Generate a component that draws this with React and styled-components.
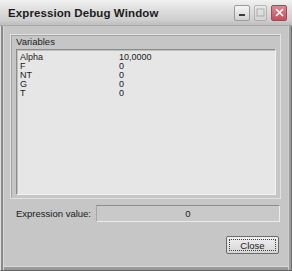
import React from "react";
import styled, { createGlobalStyle } from "styled-components";

const Global = createGlobalStyle`
  html, body { margin: 0; padding: 0; background: #c8c8c8; }
  body { font-family: "Liberation Sans", Arial, sans-serif; }
`;

const Window = styled.div`
  width: 292px;
  height: 271px;
  box-sizing: border-box;
  display: flex;
  flex-direction: column;
  background: #c6c6c6;
  border-left: 1px solid #e0e0e0;
  border-right: 1px solid #707070;
  border-bottom: 1px solid #606060;
  box-shadow: inset 2px 0 0 #8a8a8a, inset 3px 0 0 #d8d8d8, inset -2px 0 0 #9a9a9a, inset -3px 0 0 #d0d0d0, inset 0 -3px 0 #9a9a9a, inset 0 -4px 0 #d8d8d8;
`;

const TitleBar = styled.div`
  height: 25px;
  flex: none;
  display: flex;
  align-items: center;
  padding: 0 5px 0 8px;
  background: linear-gradient(#f2f2f2 0%, #dedede 40%, #cfcfcf 80%, #bdbdbd 100%);
  border-bottom: 1px solid #a8a8a8;
  margin: 0 -1px;
`;

const Title = styled.div`
  flex: 1;
  font-family: "Liberation Sans", Arial, sans-serif;
  font-weight: bold;
  font-size: 11.5px;
  color: #1c1c1c;
  letter-spacing: 0.1px;
`;

const TitleButtons = styled.div`
  display: flex;
  gap: 4px;
  align-items: center;
`;

const CapButton = styled.div`
  width: ${(p) => p.w || 16}px;
  height: 16px;
  box-sizing: border-box;
  border-radius: 2px;
  border: 1px solid ${(p) => (p.close ? "#a04854" : "#9a9a9a")};
  background: ${(p) =>
    p.close
      ? "linear-gradient(#d98a94, #c0505e)"
      : p.disabled
      ? "linear-gradient(#ececec, #d8d8d8)"
      : "linear-gradient(#f6f6f6, #d2d2d2)"};
  display: flex;
  align-items: center;
  justify-content: center;
  opacity: ${(p) => (p.disabled ? 0.6 : 1)};
`;

const Body = styled.div`
  flex: 1;
  display: flex;
  flex-direction: column;
  padding: 8px 10px 0 9px;
`;

const Group = styled.div`
  display: flex;
  flex-direction: column;
  border: 1px solid #e2e2e2;
  box-shadow: inset 1px 1px 0 #a4a4a4;
  padding: 0 4px 3px 5px;
  height: 165px;
  box-sizing: border-box;
`;

const GroupLabel = styled.div`
  font-size: 9.5px;
  color: #202020;
  height: 14px;
  line-height: 14px;
`;

const ListBox = styled.div`
  flex: 1;
  background: #e6e6e6;
  border: 1px solid #8c8c8c;
  border-right-color: #f2f2f2;
  border-bottom-color: #f2f2f2;
  box-shadow: inset 1px 1px 0 #c0c0c0;
  padding: 3px 3px;
`;

const Row = styled.div`
  display: grid;
  grid-template-columns: 99px 1fr;
  font-size: 9px;
  line-height: 9px;
  height: 9px;
  color: #1a1a1a;
`;

const ExprRow = styled.div`
  display: flex;
  align-items: center;
  margin-top: 6px;
  padding-left: 6px;
  gap: 6px;
`;

const ExprLabel = styled.div`
  font-size: 9.5px;
  color: #1a1a1a;
  white-space: nowrap;
  width: 74px;
`;

const ExprField = styled.div`
  flex: 1;
  height: 17px;
  box-sizing: border-box;
  border-top: 1px solid #8c8c8c;
  border-left: 1px solid #a6a6a6;
  border-bottom: 1px solid #ececec;
  border-right: 1px solid #ececec;
  background: #c9c9c9;
  display: flex;
  align-items: center;
  justify-content: center;
  font-size: 9.5px;
  color: #1a1a1a;
  margin-right: 1px;
`;

const ButtonRow = styled.div`
  display: flex;
  justify-content: flex-end;
  margin-top: 14px;
  padding-right: 2px;
`;

const Button = styled.button`
  width: 53px;
  height: 18px;
  box-sizing: border-box;
  border: 1px solid #6a6a6a;
  border-radius: 2px;
  background: linear-gradient(#f0f0f0, #d6d6d6);
  font-family: "Liberation Sans", Arial, sans-serif;
  font-size: 9.5px;
  color: #1a1a1a;
  padding: 0;
  position: relative;
  &::after {
    content: "";
    position: absolute;
    inset: 2px;
    border: 1px dotted #404040;
  }
`;

const vars = [
  ["Alpha", "10,0000"],
  ["F", "0"],
  ["NT", "0"],
  ["G", "0"],
  ["T", "0"],
];

export default function App() {
  return (
    <>
      <Global />
      <Window>
        <TitleBar>
          <Title>Expression Debug Window</Title>
          <TitleButtons>
            <CapButton>
              <svg width="13" height="13" viewBox="0 0 13 13">
                <rect x="3" y="8" width="6" height="2" fill="#3a3a3a" />
              </svg>
            </CapButton>
            <CapButton w={13} disabled>
              <svg width="11" height="11" viewBox="0 0 11 11">
                <rect x="2" y="2" width="7" height="7" fill="none" stroke="#909090" strokeWidth="1" />
              </svg>
            </CapButton>
            <CapButton close>
              <svg width="13" height="13" viewBox="0 0 13 13">
                <path d="M3 3 L10 10 M10 3 L3 10" stroke="#ffffff" strokeWidth="1.6" />
              </svg>
            </CapButton>
          </TitleButtons>
        </TitleBar>
        <Body>
          <Group>
            <GroupLabel>Variables</GroupLabel>
            <ListBox>
              {vars.map(([n, v]) => (
                <Row key={n}>
                  <span>{n}</span>
                  <span>{v}</span>
                </Row>
              ))}
            </ListBox>
          </Group>
          <ExprRow>
            <ExprLabel>Expression value:</ExprLabel>
            <ExprField>0</ExprField>
          </ExprRow>
          <ButtonRow>
            <Button>Close</Button>
          </ButtonRow>
        </Body>
      </Window>
    </>
  );
}
